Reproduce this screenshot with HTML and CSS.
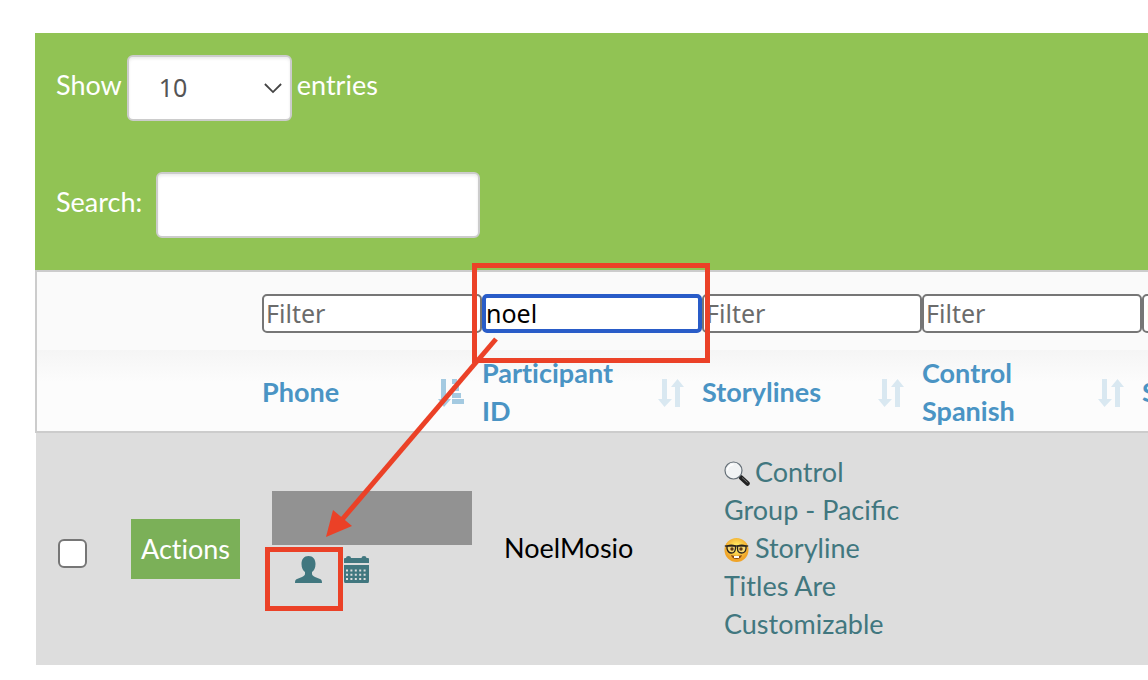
FILE: index.html
```
<!DOCTYPE html>
<html lang="en">
<head>
  <meta charset="UTF-8" />
  <title>Participants</title>

  <link rel="stylesheet" href="styles.css">
</head>
<body>
  <!-- Icons used more than once -->
  <svg class="sprite" aria-hidden="true">
    <symbol id="sort" viewBox="0 0 26 28">
      <path d="M4 0h5v20h5L6.500 28 0 20h4zM17 28h5V8h4L19.500 0 13 8h4z" />
    </symbol>
  </svg>

  <div class="grid">
    <div class="toolbar">
      <div class="toolbar-row length">
        <label for="length">Show</label>
        <span class="select-box">
          <select id="length">
            <option>10</option>
            <option>25</option>
            <option>50</option>
          </select>
          <svg class="chevron" viewBox="0 0 20 12"><path d="M1 1l9 9 9-9" /></svg>
        </span>
        <span class="label-text">entries</span>
      </div>
      <div class="toolbar-row search">
        <label for="search">Search:</label>
        <input type="search" id="search" />
      </div>
    </div>

    <table>
      <colgroup>
        <col class="col-check">
        <col class="col-actions">
        <col class="col-data">
        <col class="col-data">
        <col class="col-data">
        <col class="col-data">
        <col class="col-data">
      </colgroup>
      <thead>
        <tr class="filters">
          <td></td>
          <td></td>
          <td><input type="text" placeholder="Filter" aria-label="Filter phone" /></td>
          <td><input type="text" class="active" value="noel" aria-label="Filter participant ID" /></td>
          <td><input type="text" placeholder="Filter" aria-label="Filter storylines" /></td>
          <td><input type="text" placeholder="Filter" aria-label="Filter control Spanish" /></td>
          <td><input type="text" placeholder="Filter" aria-label="Filter S" /></td>
        </tr>
        <tr class="headings">
          <th></th>
          <th></th>
          <th>Phone
            <svg class="sort sorted" viewBox="0 0 26 28">
              <path d="M3 0h5v20h5L6 28 0 20h3zM14 0h5v5h-5zM14 7h7v5h-7zM14 14h9v5h-9zM14 20h12v5H14z" />
            </svg>
          </th>
          <th>Participant ID <svg class="sort"><use href="#sort" /></svg></th>
          <th>Storylines <svg class="sort"><use href="#sort" /></svg></th>
          <th>Control Spanish <svg class="sort"><use href="#sort" /></svg></th>
          <th>S</th>
        </tr>
      </thead>
      <tbody>
        <tr>
          <td><input type="checkbox" aria-label="Select NoelMosio" /></td>
          <td><button type="button">Actions</button></td>
          <td class="phone">
            <div class="redacted"></div>
            <div class="links">
              <a href="#" aria-label="Profile">
                <svg class="user" viewBox="0 0 27 27">
                  <path d="M13.500 0C9 0 6.500 3 6.500 8c0 4 1.500 6.500 3.500 8v2c0 1-1 2-3 3l-5 2c-1.500.7-2 1.500-2 4h27c0-2.500-.5-3.300-2-4l-5-2c-2-1-3-2-3-3v-2c2-1.500 3.500-4 3.500-8 0-5-2.500-8-7-8z" />
                </svg>
              </a>
              <a href="#" aria-label="Calendar">
                <svg class="calendar" viewBox="0 0 25 27">
                  <path d="M0 3q0-1 1-1h1q0-2 2.500-2T7 2h10.500q0-2 2.500-2t2.500 2H24q1 0 1 1v4H0zM0 9h25v16q0 2-1 2H1q-1 0-1-2z" />
                  <path class="days" d="M2 14.500h22M2 18.700h22M2 23h22" />
                </svg>
              </a>
            </div>
          </td>
          <td>NoelMosio</td>
          <td class="storylines">
            <a href="#"><svg class="emoji" viewBox="0 0 26 26">
              <path d="M17 16.500l6.500 6" stroke="#222" stroke-width="4.500" stroke-linecap="round" />
              <path d="M18 16.500l5.500 5" stroke="#777" stroke-width="1" />
              <circle cx="9.500" cy="9.500" r="8.500" fill="#f1f3f4" stroke="#667078" stroke-width="1.200" />
              <path d="M3.500 9.500a6 6 0 0 1 6-6" fill="none" stroke="#fff" stroke-width="1.500" />
            </svg> Control Group - Pacific</a><br>
            <a href="#"><svg class="emoji" viewBox="0 0 26 26">
              <defs>
                <radialGradient id="face" cy=".4">
                  <stop offset=".3" stop-color="#ffe35c" />
                  <stop offset="1" stop-color="#f0a428" />
                </radialGradient>
              </defs>
              <circle cx="12.500" cy="13" r="12" fill="url(#face)" />
              <g fill="#f6d873" stroke="#28231d" stroke-width="1.300">
                <path d="M3 9q4.500-1.500 8.500 0v2.500q-.5 4.500-4 4.500T3 11.500zM13.500 9q4-1.500 8.500 0v2.500q-.5 4.500-4.500 4.500t-4-4.500z" />
                <path d="M.8 9h23.400" />
              </g>
              <circle cx="8" cy="12" r="1.700" fill="#643b12" />
              <circle cx="17" cy="12" r="1.700" fill="#643b12" />
              <path d="M7 18q5.500 2 11 0-1 4-5.500 4T7 18z" fill="#8b4a13" />
              <path d="M10 19h5v2h-5z" fill="#fff" />
            </svg> Storyline Titles Are Customizable</a>
          </td>
          <td></td>
          <td></td>
        </tr>
      </tbody>
    </table>

    <!-- Red callouts drawn over the table -->
    <svg class="callouts" viewBox="0 0 700 632" aria-hidden="true">
      <path class="line" d="M439.500 232.500h233v95h-233zM232.500 516.500h73v59h-73z" />
      <path class="line" d="M461 306L305 489" />
      <path class="head" d="M291 504l7-27 19 16z" />
    </svg>
  </div>
</body>
</html>
```
FILE: styles.css
```
* {
  box-sizing: border-box;
}

body {
  margin: 0;
  padding: 33px 0 0 35px;
  overflow: hidden;
  background-color: #fff;
  color: #000;
  font-family: "Lato", sans-serif;
  font-size: 27px;
  line-height: 38px;
  font-variant-ligatures: none;
}

.sprite {
  position: absolute;
  width: 0;
  height: 0;
}

.grid {
  position: relative;
  overflow: hidden;
}

/* toolbar */
.toolbar {
  display: flex;
  flex-direction: column;
  gap: 51px;
  padding: 22px 21px 32px;
  background-color: #91c354;
  color: #fff;
}

.toolbar-row {
  display: flex;
  align-items: center;
}

.length {
  gap: 5px;
}

.search {
  gap: 14px;
}

.toolbar label,
.label-text {
  padding-bottom: 6px;
}

.select-box {
  position: relative;
}

.toolbar select,
.toolbar input {
  display: block;
  height: 66px;
  border: 2px solid #ccc;
  border-radius: 6px;
  background-color: #fff;
  box-shadow: inset 0 2px 3px rgba(0, 0, 0, 0.08);
  color: #555;
  font-family: "Noto Sans", sans-serif;
  font-size: 25px;
}

.toolbar select {
  width: 165px;
  padding: 0 30px 2px;
  appearance: none;
}

.toolbar input {
  width: 324px;
  padding: 0 12px;
}

.chevron {
  position: absolute;
  top: 28px;
  right: 10px;
  width: 18px;
  height: 11px;
  fill: none;
  stroke: #444;
  stroke-width: 2;
  pointer-events: none;
}

/* table */
table {
  width: 1327px;
  table-layout: fixed;
  border-spacing: 0;
}

.col-check {
  width: 74px;
}

.col-actions {
  width: 153px;
}

.col-data {
  width: 220px;
}

td,
th {
  padding: 0;
}

thead tr > :first-child {
  border-left: 2px solid #ccc;
}

.filters td {
  height: 80px;
  padding-bottom: 17px;
  border-top: 2px solid #ccc;
  background-color: #fafafa;
  vertical-align: bottom;
}

.filters input {
  display: block;
  width: 100%;
  height: 39px;
  padding: 0 2px 2px;
  border: 2px solid #767676;
  border-radius: 5px;
  background-color: #fff;
  color: #000;
  font-family: "Noto Sans", sans-serif;
  font-size: 25px;
}

.filters input::placeholder {
  color: #6b6b6b;
}

.filters .active {
  padding: 0 0 2px;
  border: 4px solid #295cc8;
}

.headings th {
  position: relative;
  height: 83px;
  padding: 3px 62px 0 0;
  border-bottom: 2px solid #ccc;
  background-image: linear-gradient(#f5f5f5, #fcfcfc 40%);
  color: #4a94c4;
  font-weight: bold;
  text-align: left;
}

.sort {
  position: absolute;
  top: 29px;
  right: 18px;
  width: 26px;
  height: 28px;
  fill: #d9e8f1;
}

.sorted {
  fill: #a4cae1;
}

tbody td {
  padding: 20px 22px 22px;
  background-color: #ddd;
}

tbody td:first-child {
  border-left: 1px solid #fff;
}

input[type="checkbox"] {
  display: block;
  width: 29px;
  height: 29px;
  margin: 10px 0 0;
  border: 2px solid #767676;
  border-radius: 6px;
  background-color: #fff;
  appearance: none;
}

button {
  display: block;
  height: 60px;
  margin-top: 2px;
  padding: 0 10px;
  border: none;
  background-color: #7bb058;
  color: #fff;
  font: inherit;
  font-variant-ligatures: none;
  cursor: pointer;
}

tbody td.phone {
  padding: 58px 10px 0;
  vertical-align: top;
}

.redacted {
  height: 54px;
  background-color: #929292;
}

.links {
  display: flex;
  gap: 22px;
  padding: 11px 23px 0;
}

.user,
.calendar {
  display: block;
  width: 27px;
  height: 27px;
  fill: #41777f;
}

.calendar {
  width: 25px;
}

.days {
  stroke: #ddd;
  stroke-width: 2;
  stroke-dasharray: 2 2.400;
}

.storylines {
  font-variant-ligatures: normal;
}

.storylines a {
  color: #41777f;
  text-decoration: none;
}

.emoji {
  width: 26px;
  height: 26px;
  margin-right: -2px;
  vertical-align: -5px;
}

/* callouts */
.callouts {
  position: absolute;
  top: 0;
  left: 0;
  width: 700px;
  height: 632px;
  pointer-events: none;
}

.line {
  fill: none;
  stroke: #eb4127;
  stroke-width: 5;
}

.head {
  fill: #eb4127;
}
```
